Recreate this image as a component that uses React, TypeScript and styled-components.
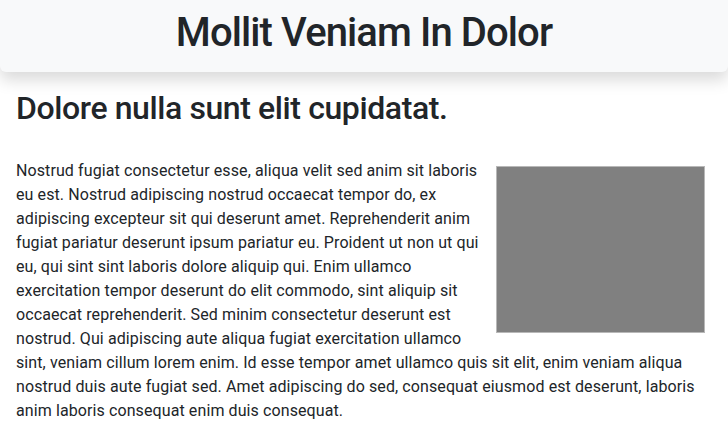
import React from "react";
import styled, { createGlobalStyle } from "styled-components";

const Global = createGlobalStyle`
  html, body { margin: 0; padding: 0; background: #fff; }
  body {
    font-family: Roboto, "Noto Sans", "Liberation Sans", sans-serif;
    color: #212529;
    -webkit-font-smoothing: antialiased;
  }
`;

const Header = styled.header`
  background: #f8f9fa;
  box-shadow: 0 8px 16px rgba(0, 0, 0, 0.15);
  border-radius: 0 0 6px 6px;
  padding: 9px 16px 15px;
  display: flex;
  justify-content: center;
`;

const Title = styled.h1`
  margin: 0;
  font-size: 40px;
  font-weight: 500;
  line-height: 48px;
  letter-spacing: -0.9px;
`;

const Main = styled.main`
  padding: 17px 16px 0;
`;

const Heading = styled.h2`
  margin: 0 0 32px;
  font-size: 32px;
  font-weight: 500;
  line-height: 38.4px;
  letter-spacing: -0.4px;
`;

const Para = styled.p`
  margin: 0;
  font-size: 16px;
  line-height: 24px;
  letter-spacing: 0.1px;
`;

const Figure = styled.div`
  float: right;
  width: 207px;
  height: 165px;
  margin: 7px 7px 8px 16px;
  background: #808080;
  border: 1px solid #b8b8b8;
`;

export default function App() {
  return (
    <>
      <Global />
      <Header>
        <Title>Mollit Veniam In Dolor</Title>
      </Header>
      <Main>
        <Heading>Dolore nulla sunt elit cupidatat.</Heading>
        <Para>
          <Figure />
          Nostrud fugiat consectetur esse, aliqua velit sed anim sit laboris eu
          est. Nostrud adipiscing nostrud occaecat tempor do, ex adipiscing
          excepteur sit qui deserunt amet. Reprehenderit anim fugiat pariatur
          deserunt ipsum pariatur eu. Proident ut non ut qui eu, qui sint sint
          laboris dolore aliquip qui. Enim ullamco exercitation tempor deserunt
          do elit commodo, sint aliquip sit occaecat reprehenderit. Sed minim
          consectetur deserunt est nostrud. Qui adipiscing aute aliqua fugiat
          exercitation ullamco sint, veniam cillum lorem enim. Id esse tempor
          amet ullamco quis sit elit, enim veniam aliqua nostrud duis aute
          fugiat sed. Amet adipiscing do sed, consequat eiusmod est deserunt,
          laboris anim laboris consequat enim duis consequat.
        </Para>
      </Main>
    </>
  );
}
